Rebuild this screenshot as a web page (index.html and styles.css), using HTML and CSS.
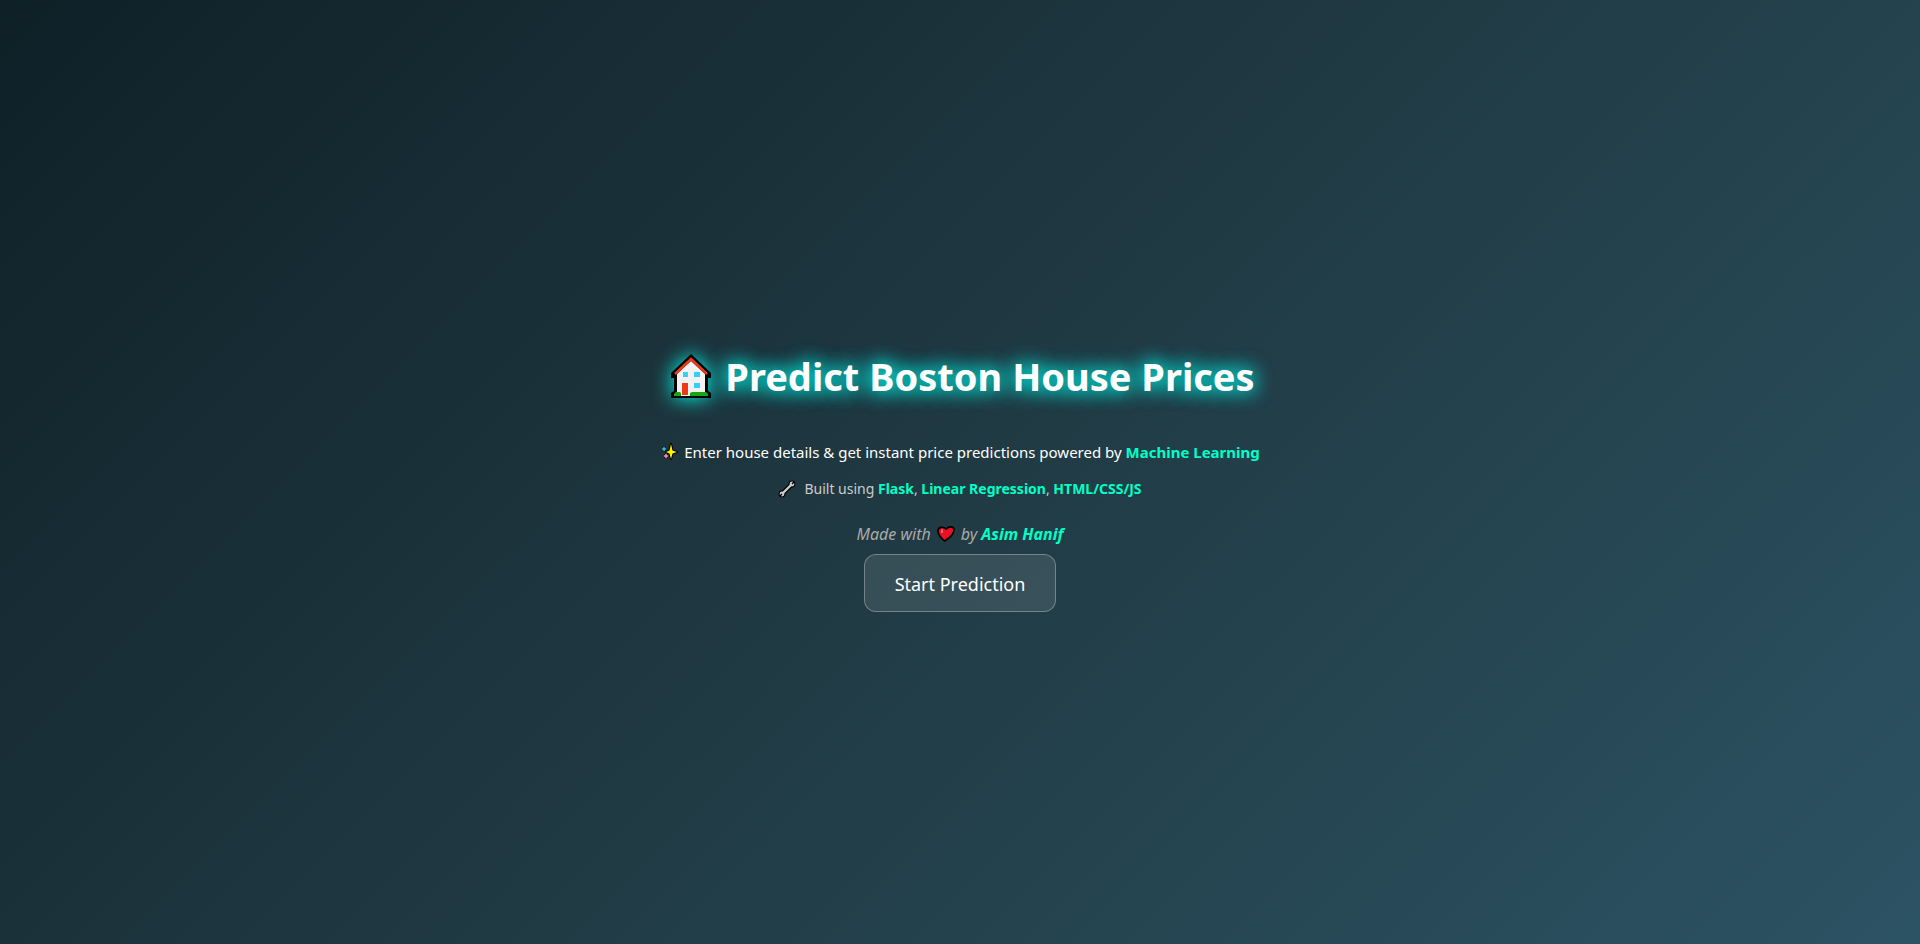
FILE: index.html
```html
<!DOCTYPE html>
<html lang="en">
<head>
<meta charset="utf-8">
<title>Boston House Price Prediction</title>
<meta name="viewport" content="width=device-width, initial-scale=1">
<link rel="stylesheet" href="styles.css">
</head>
<body>
<main class="hero">
  <h1 class="title">
    <svg class="house" viewBox="0 0 40 44" aria-hidden="true">
      <path d="M20 0 L40 19 V24 H37 V37 L40 39 V44 H0 V39 L3 37 V24 H0 V19 Z" fill="#000"/>
      <path d="M20 7 L34 20 V42 H6 V20 Z" fill="#f2f2f2"/>
      <path d="M4 20 L20 5 L36 20" fill="none" stroke="#f03a17" stroke-width="2.4"/>
      <path d="M3 42 V40 L5 38 H9 L10 39 V42 Z M19 42 V39 L21 38 H35 L37 40 V42 Z" fill="#16a811"/>
      <path d="M11 29 H17 V41 H11 Z" fill="#f03a17"/>
      <path d="M12 18 H17 V23 H12 Z M23 18 H29 V23 H23 Z M23 29 H29 V34 H23 Z" fill="#31d2f7"/>
    </svg>
    <span>Predict Boston House Prices</span>
  </h1>
  <p class="line lead">
    <svg class="icon" viewBox="0 0 18 18" aria-hidden="true">
      <path d="M11 1 L12.500 7.500 L17 9 L12.500 10.500 L11 16 L9.500 10.500 L6 9 L9.500 7.500 Z" fill="#fff100" stroke="#000" stroke-width="2" stroke-linejoin="round" paint-order="stroke"/>
      <path d="M4 3 L5 5 L7 6 L5 7 L4 9 L3 7 L1 6 L3 5 Z" fill="#31b8e0" stroke="#000" stroke-width="1" paint-order="stroke"/>
      <path d="M6 10 L7 12 L9 13 L7 14 L6 16 L5 14 L3 13 L5 12 Z" fill="#ef8fb0" stroke="#000" stroke-width="1" paint-order="stroke"/>
    </svg>
    <span>Enter house details &amp; get instant price predictions powered by <strong>Machine Learning</strong></span>
  </p>
  <p class="line built">
    <svg class="icon" viewBox="0 0 18 18" aria-hidden="true">
      <path d="M4 14 L14 4" stroke="#000" stroke-width="4.600"/>
      <circle cx="4" cy="14" r="3.400"/><circle cx="14" cy="4" r="3.400"/>
      <path d="M4 14 L14 4" stroke="#ccc" stroke-width="2.400"/>
      <circle cx="4" cy="14" r="2.400" fill="#ccc"/><circle cx="14" cy="4" r="2.400" fill="#ccc"/>
      <path d="M4 14 L2 16 M14 4 L16 2" stroke="#000" stroke-width="1.400"/>
    </svg>
    <span>Built using <strong>Flask</strong>, <strong>Linear Regression</strong>, <strong>HTML/CSS/JS</strong></span>
  </p>
  <p class="line credit">
    <span>Made with</span>
    <svg class="icon heart" viewBox="0 0 18 18" aria-hidden="true">
      <path d="M7.500 16 C4 13 1 9 1 6 C1 2 6 1 9 4 C12 1 17 1 17 5 C17 10 12 13 7.500 16 Z" fill="#e81224" stroke="#000" stroke-width="1.600"/>
      <path d="M4 5 L6 4 L6 8 L4 8 Z" fill="#f8606c"/>
    </svg>
    <span>by <strong>Asim Hanif</strong></span>
  </p>
  <button class="start" type="button">Start Prediction</button>
</main>
</body>
</html>
```
FILE: styles.css
```css
* {
  box-sizing: border-box;
}

body {
  margin: 0;
  min-height: 100vh;
  background: linear-gradient(135deg, #0f2027, #203a43, #2c5364);
  color: #fff;
  font-family: "Segoe UI", "Noto Sans", "Open Sans", sans-serif;
}

.hero {
  min-height: 100vh;
  padding: 15px 16px 0;
  display: flex;
  flex-direction: column;
  align-items: center;
  justify-content: center;
  text-align: center;
}

.title {
  display: flex;
  align-items: center;
  gap: 14px;
  margin: 0 0 36px;
  padding-left: 6px;
  font-size: 38px;
  line-height: 56px;
  font-weight: 700;
  text-shadow: 0 0 20px #00fff0, 0 0 20px #00d4c8;
}

.house {
  flex: none;
  width: 40px;
  height: 44px;
  filter: drop-shadow(0 0 10px #00fff0);
}

.line {
  display: flex;
  align-items: center;
  gap: 6px;
  margin: 0;
  font-size: 15px;
  line-height: 24px;
}

.line strong {
  color: #00ffc8;
}

.icon {
  flex: none;
  width: 18px;
  height: 18px;
}

.lead {
  margin-bottom: 13px;
}

.built {
  gap: 8px;
  margin-bottom: 21px;
  color: #ccc;
  font-size: 14px;
}

.credit {
  margin-bottom: 8px;
  color: #aaa;
  font-size: 16px;
  font-style: italic;
}

.start {
  padding: 15px 30px 13px;
  border: 1px solid rgba(255, 255, 255, 0.3);
  border-radius: 12px;
  background: rgba(255, 255, 255, 0.1);
  color: #fff;
  font-family: inherit;
  font-size: 18px;
  line-height: 28px;
  cursor: pointer;
}
```
